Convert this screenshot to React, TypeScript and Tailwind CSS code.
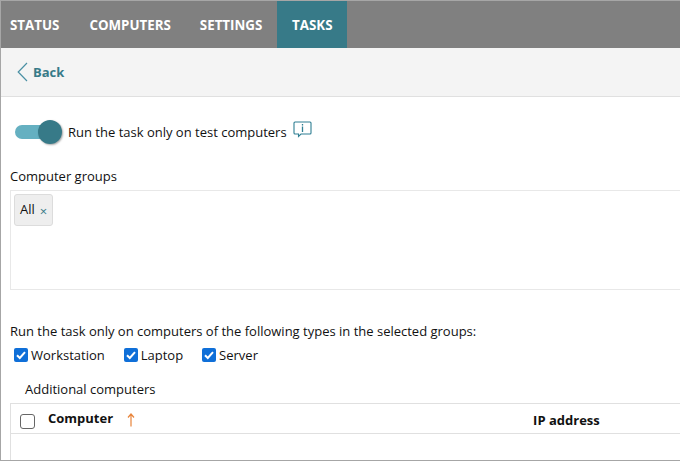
import React from 'react';

const TypeCheck: React.FC<{ label: string; className?: string }> = ({ label, className }) => (
  <label className={`flex items-center ${className ?? ''}`}>
    <span className="flex h-[14px] w-[14px] items-center justify-center rounded-[2px] bg-[#0f6fd8]">
      <svg viewBox="0 0 14 14" className="h-[14px] w-[14px]" fill="none" stroke="#fff" strokeWidth="2">
        <path d="M3 7.2 L5.8 10 L11 4.2" />
      </svg>
    </span>
    <span className="ml-[3px] text-[13px] leading-[18px]">{label}</span>
  </label>
);

const App: React.FC = () => {
  return (
    <div className="h-[461px] w-[680px] overflow-hidden border-y border-l border-[#a6a6a6] bg-white font-['Open_Sans',sans-serif] text-[13px] text-[#111]">
      <nav className="flex h-[47px] bg-[#808080] text-[13.33px] font-bold text-white">
        <div className="flex items-center pl-[9px] pr-[30px] pt-[2px]">STATUS</div>
        <div className="flex items-center pr-[29px] pt-[2px]">COMPUTERS</div>
        <div className="flex items-center pr-[15px] pt-[2px]">SETTINGS</div>
        <div className="flex w-[70px] items-center justify-center bg-[#377a88] pt-[2px]">TASKS</div>
      </nav>

      <div className="flex h-[49px] items-center border-b border-[#e0e0e0] bg-[#f4f4f4] pl-[16px]">
        <svg width="11" height="20" viewBox="0 0 11 20" fill="none" stroke="#4a90a4" strokeWidth="1.2">
          <path d="M10 1 L1.2 10 L10 19" />
        </svg>
        <span className="ml-[5px] mt-[2px] font-bold text-[#377a88]">Back</span>
      </div>

      <div className="mt-[23px] flex items-center pl-[14px]">
        <div className="relative h-[24px] w-[47px]">
          <div className="absolute left-0 top-[5px] h-[14px] w-[44px] rounded-full bg-[#65b0c1]" />
          <div className="absolute right-0 top-0 h-[24px] w-[24px] rounded-full bg-[#377a88] shadow-[1px_1px_2px_rgba(0,0,0,0.35)]" />
        </div>
        <span className="ml-[6px] mt-[1px]">Run the task only on test computers</span>
        <svg className="mb-[5px] ml-[6px]" width="19" height="17" viewBox="0 0 19 17" fill="none" stroke="#2f7f93" strokeWidth="1.1">
          <path d="M2 1 H17 Q18 1 18 2 V12 Q18 13 17 13 H8 L5.5 15.5 V13 H2 Q1 13 1 12 V2 Q1 1 2 1 Z" />
          <path d="M9.5 3 V4.4 M9.5 5.6 V11" strokeWidth="1.3" />
        </svg>
      </div>

      <div className="ml-[9px] mt-[23px] leading-[18px]">Computer groups</div>
      <div className="ml-[9px] mt-[5px] h-[100px] border border-r-0 border-[#e8e8e8] p-[3px]">
        <div className="flex h-[32px] w-[39px] items-center rounded-[3px] border border-[#dcdcdc] bg-[#eeeeee] pl-[5px]">
          <span>All</span>
          <span className="ml-[5px] mt-[2px] text-[13px] leading-none text-[#377a88]">×</span>
        </div>
      </div>

      <div className="ml-[9px] mt-[32px] leading-[18px]">Run the task only on computers of the following types in the selected groups:</div>
      <div className="ml-[13px] mt-[6px] flex">
        <TypeCheck label="Workstation" />
        <TypeCheck label="Laptop" className="ml-[19px]" />
        <TypeCheck label="Server" className="ml-[19px]" />
      </div>

      <div className="ml-[24px] mt-[16px] leading-[18px]">Additional computers</div>
      <div className="ml-[9px] mt-[5px] h-[60px] border-l border-t border-[#e0e0e0]">
        <div className="flex h-[30px] border-b border-[#e0e0e0]">
          <span className="ml-[9px] mt-[10px] h-[15px] w-[15px] rounded-[3px] border border-[#666] bg-white" />
          <span className="ml-[13px] mt-[5px] font-bold">Computer</span>
          <svg className="ml-[14px] mt-[9px]" width="8" height="14" viewBox="0 0 8 14" fill="none" stroke="#e8843a" strokeWidth="1.2">
            <path d="M4 13.5 V1 M1 4.5 L4 1 L7 4.5" />
          </svg>
          <span className="ml-[398px] mt-[7px] font-bold">IP address</span>
        </div>
      </div>
    </div>
  );
};

export default App;
